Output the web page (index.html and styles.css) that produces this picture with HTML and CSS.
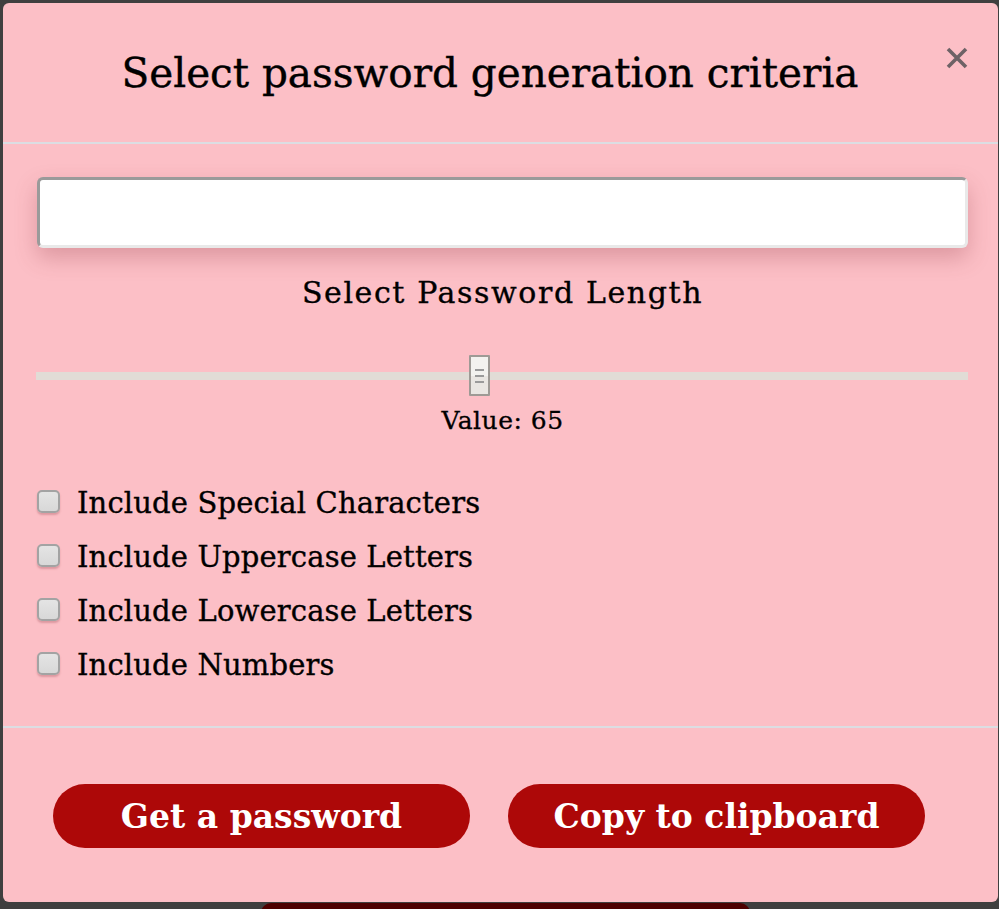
FILE: index.html
```html
<!DOCTYPE html>
<html lang="en">
<head>
<meta charset="utf-8">
<title>Password Generator</title>
<link rel="stylesheet" href="styles.css">
</head>
<body>
<div class="backdrop-page">
  <button class="page-btn">Generate Password</button>
</div>
<div class="modal">
  <header class="modal-header">
    <h1 class="modal-title">Select password generation criteria</h1>
    <button class="close" aria-label="Close">
      <svg width="22" height="22" viewBox="0 0 22 22"><path d="M2 2 L20 20 M20 2 L2 20" stroke="#6e6266" stroke-width="3.6" stroke-linecap="butt"/></svg>
    </button>
  </header>
  <section class="modal-body">
    <input class="pw-field" type="text" aria-label="Password">
    <p class="len-label">Select Password Length</p>
    <input class="slider" type="range" min="8" max="128" value="65">
    <p class="value">Value: 65</p>
    <ul class="options">
      <li><label><input type="checkbox"><span>Include Special Characters</span></label></li>
      <li><label><input type="checkbox"><span>Include Uppercase Letters</span></label></li>
      <li><label><input type="checkbox"><span>Include Lowercase Letters</span></label></li>
      <li><label><input type="checkbox"><span>Include Numbers</span></label></li>
    </ul>
  </section>
  <footer class="modal-footer">
    <button class="btn">Get a password</button>
    <button class="btn">Copy to clipboard</button>
  </footer>
</div>
</body>
</html>
```
FILE: styles.css
```css
html, body {
  margin: 0;
  padding: 0;
  height: 909px;
  overflow: hidden;
}
body {
  background: #3f3f3f;
  font-family: "DejaVu Serif", serif;
  position: relative;
}
.backdrop-page {
  position: absolute;
  left: 0;
  top: 0;
  width: 999px;
  height: 909px;
  overflow: hidden;
}
.page-btn {
  position: absolute;
  left: 261px;
  top: 903px;
  width: 489px;
  height: 60px;
  background: #4d0000;
  border: none;
  border-radius: 10px;
  color: #8a8a8a;
  font-family: "DejaVu Serif", serif;
  font-weight: bold;
  font-size: 34px;
  padding: 2px 0 0;
  display: block;
  text-align: center;
  line-height: 40px;
}
.modal {
  position: absolute;
  left: 3px;
  top: 3px;
  width: 995px;
  height: 899px;
  background: #fcbfc6;
  border-radius: 6px;
  display: flex;
  flex-direction: column;
  overflow: hidden;
}
.modal-header {
  height: 139px;
  flex: none;
  display: flex;
  align-items: center;
  justify-content: center;
  position: relative;
  border-bottom: 2px solid #dcdde2;
}
.modal-title {
  margin: 0 0 0 -21px;
  font-family: "DejaVu Serif", serif;
  font-weight: normal;
  font-size: 40.5px;
  line-height: 60px;
  color: #000;
  -webkit-text-stroke: 0.4px #000;
}
.close {
  position: absolute;
  right: 30px;
  top: 44px;
  background: none;
  border: none;
  padding: 0;
  width: 22px;
  height: 22px;
}
.modal-body {
  height: 584px;
  flex: none;
  padding: 33px 30px 0 34px;
  box-sizing: border-box;
  border-bottom: 2px solid #dcdde2;
  display: flex;
  flex-direction: column;
}
.pw-field {
  width: 931px;
  height: 71px;
  flex: none;
  box-sizing: border-box;
  background: #fff;
  border-style: solid;
  border-width: 3px;
  border-color: #9a9a9a #e9e9e9 #e9e9e9 #9a9a9a;
  border-radius: 6px;
  box-shadow: 0 10px 22px rgba(140, 50, 60, 0.28);
  margin: 0;
}
.len-label {
  margin: 28px 0 0;
  text-align: center;
  font-size: 30px;
  line-height: 34px;
  color: #000;
  letter-spacing: 1.6px;
  -webkit-text-stroke: 0.35px #000;
}
.slider {
  -webkit-appearance: none;
  appearance: none;
  width: 932px;
  height: 41px;
  flex: none;
  margin: 45px 0 0 -1px;
  background: transparent;
}
.slider::-webkit-slider-runnable-track {
  height: 8px;
  background: #e1dcd6;
  border: none;
}
.slider::-webkit-slider-thumb {
  -webkit-appearance: none;
  width: 21px;
  height: 41px;
  margin-top: -17px;
  box-sizing: border-box;
  border: 2px solid #9e9a95;
  border-radius: 1px;
  background:
    linear-gradient(#9a9a9a, #9a9a9a) center 12px / 9px 2px no-repeat,
    linear-gradient(#9a9a9a, #9a9a9a) center 18px / 9px 2px no-repeat,
    linear-gradient(#9a9a9a, #9a9a9a) center 24px / 9px 2px no-repeat,
    linear-gradient(#f3f2ef 50%, #e9e6e2 50%);
}
.value {
  margin: 10px 0 0;
  text-align: center;
  font-size: 25px;
  line-height: 30px;
  color: #000;
  letter-spacing: 0.5px;
  -webkit-text-stroke: 0.3px #000;
}
.options {
  list-style: none;
  margin: 48px 0 0;
  padding: 0;
  display: flex;
  flex-direction: column;
  gap: 16px;
}
.options label {
  display: flex;
  align-items: center;
  gap: 17px;
  height: 38px;
  font-size: 29px;
  color: #000;
  letter-spacing: 0.15px;
  -webkit-text-stroke: 0.35px #000;
}
.options input {
  -webkit-appearance: none;
  appearance: none;
  margin: 0 0 4px 0;
  width: 23px;
  height: 23px;
  flex: none;
  box-sizing: border-box;
  border: 2px solid #a3a3a3;
  border-radius: 5px;
  background: linear-gradient(#e4e4e4, #d8d8d8);
  box-shadow: 0 2px 2px rgba(160, 80, 90, 0.35);
}
.modal-footer {
  flex: 1;
  display: flex;
  align-items: flex-start;
  gap: 38px;
  padding: 56px 0 0 50px;
}
.btn {
  width: 417px;
  height: 64px;
  border: none;
  border-radius: 32px;
  background: #ad0808;
  color: #fff;
  font-family: "DejaVu Serif", serif;
  font-weight: bold;
  font-size: 33px;
  padding: 0;
}
```
